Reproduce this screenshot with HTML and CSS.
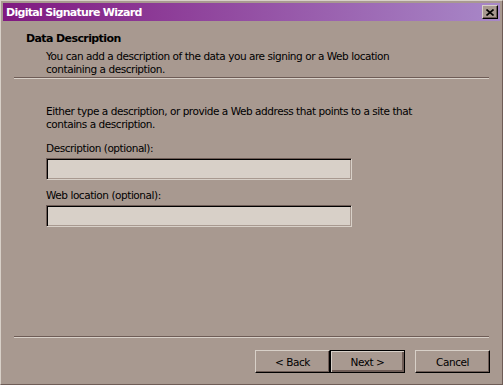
FILE: index.html
```html
<!DOCTYPE html>
<html lang="en">
<head>
    <meta charset="UTF-8" />
    <title>Digital Signature Wizard</title>
    <link rel="stylesheet" href="styles.css">
</head>
<body>
    <div class="window">
        <div class="titlebar">
            <span class="title">Digital Signature Wizard</span>
            <button class="close" type="button">
                <svg width="8" height="7" viewBox="0 0 8 7">
                    <path d="M0.5 0.5 L7.5 6.5 M7.5 0.5 L0.5 6.5" stroke="#000" stroke-width="1.6" fill="none"/>
                </svg>
            </button>
        </div>

        <div class="header">
            <h1>Data Description</h1>
            <p>You can add a description of the data you are signing or a Web location<br>containing a description.</p>
        </div>
        <div class="rule"></div>

        <div class="content">
            <p class="intro">Either type a description, or provide a Web address that points to a site that<br>contains a description.</p>
            <label class="label">Description (optional):</label>
            <div class="field"></div>
            <label class="label second">Web location (optional):</label>
            <div class="field"></div>
        </div>

        <div class="footer">
            <div class="rule"></div>
            <div class="buttons">
                <button class="btn" type="button">&lt; Back</button>
                <button class="btn default" type="button">Next &gt;</button>
                <button class="btn cancel" type="button">Cancel</button>
            </div>
        </div>
    </div>
</body>
</html>
```

FILE: styles.css
```css
body { margin: 0; font-family: "DejaVu Sans", Verdana, sans-serif; font-size: 10.5px; line-height: 13px; letter-spacing: -0.45px; color: #000; }

.window {
    width: 503px;
    height: 385px;
    box-sizing: border-box;
    display: flex;
    flex-direction: column;
    background: #a89990;
    border: 1px solid;
    border-color: #d8d0c8 #6e5c56 #6e5c56 #d8d0c8;
    padding: 2px;
}

/* Title bar */
.titlebar {
    height: 18px;
    display: flex;
    align-items: center;
    justify-content: space-between;
    padding: 0 2px 0 3px;
    background: linear-gradient(to right, #801880, #a888c8);
}
.title { color: #fff; font-weight: bold; font-size: 11px; letter-spacing: -0.7px; }
.close {
    width: 16px;
    height: 14px;
    padding: 0;
    display: flex;
    align-items: center;
    justify-content: center;
    background: #a89990;
    border: 1px solid;
    border-color: #d8d0c8 #000 #000 #d8d0c8;
    box-shadow: inset -1px -1px #6e5c56;
}

/* Header */
.header { padding-top: 11px; }
.header h1 { margin: 0 0 0 23px; font-size: 11px; font-weight: bold; letter-spacing: -0.6px; }
.header p { margin: 5px 0 1px 43px; }

.rule {
    height: 0;
    margin: 0 11px;
    border-top: 1px solid #6e5c56;
    border-bottom: 1px solid #d8d0c8;
}

/* Body */
.content { padding: 26px 0 0 43px; }
.intro { margin: 0 0 11px; }
.label { display: block; margin-bottom: 3px; }
.label.second { margin-top: 9px; }
.field {
    width: 306px;
    height: 22px;
    box-sizing: border-box;
    background: #d8d0c8;
    border: 1px solid;
    border-color: #6e5c56 #d8d0c8 #d8d0c8 #6e5c56;
    box-shadow: inset 1px 1px #000, inset -1px -1px #a89990;
}

/* Footer */
.footer { margin-top: auto; padding-bottom: 9px; }
.buttons {
    display: flex;
    justify-content: flex-end;
    padding: 12px 10px 0 0;
}
.btn {
    width: 75px;
    height: 23px;
    padding: 0;
    font-family: inherit;
    font-size: 10.5px;
    letter-spacing: -0.45px;
    color: #000;
    background: #a89990;
    border: 1px solid;
    border-color: #d8d0c8 #000 #000 #d8d0c8;
    box-shadow: inset -1px -1px #6e5c56;
}
.btn.default {
    border-color: #000;
    box-shadow: inset 1px 1px #d8d0c8, inset -2px -2px #6e5c56;
}
.btn.cancel { margin-left: 10px; }
```
